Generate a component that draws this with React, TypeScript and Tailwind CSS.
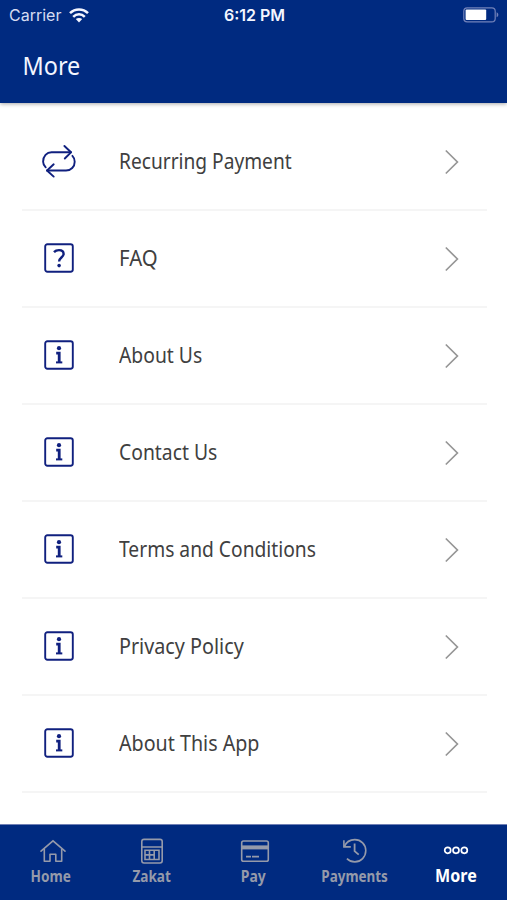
import type { ReactNode } from "react";

type MenuItem = { label: string; icon: ReactNode; fit: string };
type Tab = { label: string; icon: ReactNode; fit: string };

function RepeatIcon() {
  return (
    <svg width="34" height="34" viewBox="0 0 34 34" fill="none" stroke="#10207f" strokeWidth="1.9" strokeLinecap="round" strokeLinejoin="round">
      <path d="M3.7 23.3C2.2 21.8 1.1 20 1.1 17.7C1.1 12.2 4.8 8.3 9.5 8.3H29" />
      <path d="M22.4 2L29 8.3L22.8 14.5" />
      <path d="M30.4 11.8C31.9 13.3 32.7 15.5 32.7 17.7C32.7 22.8 29 26.5 24 26.5H5" />
      <path d="M11.7 20.3L5 26.5L11.7 32.6" />
    </svg>
  );
}

function QuestionIcon() {
  return (
    <svg width="30" height="30" viewBox="0 0 30 30" fill="none" stroke="#10207f">
      <rect x="1.2" y="1.2" width="27.6" height="27.6" rx="2.2" strokeWidth="1.9" />
      <path d="M10 9.1C11.2 7.8 13 7.1 15 7.1C17.8 7.1 19.6 8.7 19.6 10.9C19.6 14.4 15.1 14.7 15.1 18.5" strokeWidth="2.4" />
      <circle cx="15.1" cy="22.6" r="1.8" fill="#10207f" stroke="none" />
    </svg>
  );
}

function InfoIcon() {
  return (
    <svg width="30" height="30" viewBox="0 0 30 30" fill="none" stroke="#10207f">
      <rect x="1.2" y="1.2" width="27.6" height="27.6" rx="2.2" strokeWidth="1.9" />
      <circle cx="15" cy="8.2" r="2.1" fill="#10207f" stroke="none" />
      <path d="M12.2 13.2H15.2V22" strokeWidth="2.8" />
      <path d="M12 22.4H18.3" strokeWidth="2" />
    </svg>
  );
}

function Chevron() {
  return (
    <svg width="14" height="26" viewBox="0 0 14 26" fill="none" stroke="#969696" strokeWidth="1.7">
      <path d="M0.8 1.5L12.4 13L0.8 24.5" />
    </svg>
  );
}

function WifiIcon() {
  return (
    <svg width="20" height="15" viewBox="0 0 20 15" fill="none" stroke="#f4f6ff" strokeWidth="2.5">
      <path d="M1 5.2C6 0.2 14 0.2 19 5.2" />
      <path d="M4.2 8.8C7.5 5.5 12.5 5.5 15.8 8.8" />
      <path d="M10 14.4L6.8 11.1C8.6 9.5 11.4 9.5 13.2 11.1Z" fill="#f4f6ff" stroke="none" />
    </svg>
  );
}

function BatteryIcon() {
  return (
    <svg width="37" height="16" viewBox="0 0 37 16">
      <rect x="0.8" y="0.8" width="31.4" height="14" rx="3.4" fill="none" stroke="#7282b9" strokeWidth="1.2" />
      <rect x="2.6" y="2.6" width="20.6" height="10.4" rx="1" fill="#fff" />
      <path d="M33.6 5.3C35.9 6.2 35.9 9.4 33.6 10.3Z" fill="#7282b9" />
    </svg>
  );
}

const iconProps = { width: 30, height: 28, viewBox: "0 0 30 28", fill: "none", stroke: "#959aaa", strokeWidth: 1.6 };

const tabs: Tab[] = [
  {
    label: "Home",
    fit: "scale-x-[0.85]",
    icon: (
      <svg {...iconProps} className="ml-1">
        <path d="M3 13.2L15 2.8L27 13.2" strokeLinecap="round" />
        <path d="M6.3 11V23.3H12V16.3H17.8V23.3H23.7V11" strokeLinejoin="round" />
      </svg>
    ),
  },
  {
    label: "Zakat",
    fit: "scale-x-[0.85]",
    icon: (
      <svg {...iconProps}>
        <rect x="4.8" y="1.4" width="20.4" height="23.6" rx="2.2" />
        <path d="M5 9H25M8 12.3H22V21.5H8ZM12.5 12.3V21.5M17.2 12.3V21.5M8 16.9H17.2" />
      </svg>
    ),
  },
  {
    label: "Pay",
    fit: "scale-x-[0.87]",
    icon: (
      <svg {...iconProps} className="ml-[3px]">
        <rect x="1.7" y="3" width="26.6" height="20.3" rx="1.8" />
        <path d="M2 9.4H28" strokeWidth="4" />
        <path d="M6 18.7H11M12 18.7H19" strokeWidth="1.8" />
      </svg>
    ),
  },
  {
    label: "Payments",
    fit: "scale-x-[0.84]",
    icon: (
      <svg {...iconProps}>
        <path d="M3.9 2.2V8.9H10.8" />
        <path d="M4.3 8.6C6.2 4.1 9.9 1.6 14.8 1.6C21 1.6 25.8 6.5 25.8 12.6C25.8 18.8 21 23.9 14.8 23.9C11.5 23.9 8.9 22.6 6.9 20.6" />
        <path d="M14.6 5.6V13.2L18.7 16.6" strokeWidth="1.8" />
      </svg>
    ),
  },
];

const items: MenuItem[] = [
  { label: "Recurring Payment", icon: <RepeatIcon />, fit: "scale-x-[0.912]" },
  { label: "FAQ", icon: <QuestionIcon />, fit: "scale-x-[0.97]" },
  { label: "About Us", icon: <InfoIcon />, fit: "scale-x-[0.92]" },
  { label: "Contact Us", icon: <InfoIcon />, fit: "scale-x-[0.92]" },
  { label: "Terms and Conditions", icon: <InfoIcon />, fit: "scale-x-[0.916]" },
  { label: "Privacy Policy", icon: <InfoIcon />, fit: "scale-x-[0.941]" },
  { label: "About This App", icon: <InfoIcon />, fit: "scale-x-[0.937]" },
];

export default function App() {
  return (
    <div className="flex h-[900px] w-full flex-col overflow-hidden bg-white font-['Noto_Sans',sans-serif]">
      <header className="z-10 h-[103px] shrink-0 bg-[#002a80] text-[#f4f6ff] shadow-[0_1px_4px_rgba(0,0,0,0.35)]">
        <div className="grid h-[30px] grid-cols-3 items-center pr-[7px] pl-[9px] font-['Inter',sans-serif] text-base leading-none">
          <div className="flex items-center gap-2">
            <span className="text-[#d5dcf2]">Carrier</span>
            <WifiIcon />
          </div>
          <span className="text-center font-semibold">6:12 PM</span>
          <div className="flex justify-end">
            <BatteryIcon />
          </div>
        </div>
        <h1 className="origin-left scale-x-[0.9] pl-[25px] text-[26px] leading-[71px]">More</h1>
      </header>

      <main className="flex-1 pt-[11px] pr-5 pl-[22px]">
        {items.map((item) => (
          <button
            key={item.label}
            type="button"
            className="flex h-[97px] w-full items-center border-b-2 border-[#f5f5f5] pr-[28px] text-left"
          >
            <span className="flex w-[74px] shrink-0 justify-center pb-px">{item.icon}</span>
            <span className={`ml-[23px] origin-left text-[21px] whitespace-nowrap text-[#404040] ${item.fit}`}>
              {item.label}
            </span>
            <span className="ml-auto">
              <Chevron />
            </span>
          </button>
        ))}
      </main>

      <nav className="flex h-[76px] shrink-0 border-t border-[#7080b5] bg-[#002a80] text-[#959aaa]">
        {tabs.map((tab) => (
          <button key={tab.label} type="button" className="flex flex-1 basis-0 flex-col items-center pt-[13px]">
            {tab.icon}
            <span className={`text-[16px] leading-[20px] font-bold ${tab.fit}`}>{tab.label}</span>
          </button>
        ))}
        <button type="button" className="flex flex-1 basis-0 flex-col items-center pt-[20px] text-white">
          <svg width="26" height="10" viewBox="0 0 26 10" fill="none" stroke="#fff" strokeWidth="1.7">
            <circle cx="4.7" cy="5.3" r="3" />
            <circle cx="13" cy="5.3" r="3" />
            <circle cx="21.3" cy="5.3" r="3" />
          </svg>
          <span className="mt-2 scale-x-[0.87] text-[18.5px] leading-[24px] font-bold">More</span>
        </button>
      </nav>
    </div>
  );
}
